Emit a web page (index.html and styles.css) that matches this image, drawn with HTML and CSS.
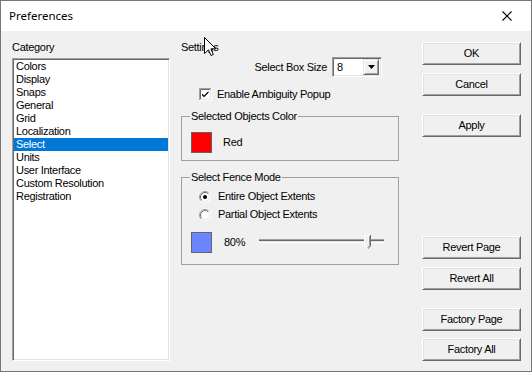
FILE: index.html
```html
<!DOCTYPE html>
<html>
<head>
<meta charset="utf-8">
<link rel="stylesheet" href="styles.css">
</head>
<body>
<div class="window">
  <div class="titlebar">
    <span class="title">Preferences</span>
    <svg class="close" width="10" height="10" viewBox="0 0 10 10"><path d="M0.5 0.5 L9.5 9.5 M9.5 0.5 L0.5 9.5" stroke="#000" stroke-width="1.1" fill="none"/></svg>
  </div>
  <div class="client">
    <div class="col-left">
      <div class="label">Category</div>
      <div class="listbox">
        <div class="item">Colors</div>
        <div class="item">Display</div>
        <div class="item">Snaps</div>
        <div class="item">General</div>
        <div class="item">Grid</div>
        <div class="item">Localization</div>
        <div class="item selected">Select</div>
        <div class="item">Units</div>
        <div class="item">User Interface</div>
        <div class="item">Custom Resolution</div>
        <div class="item">Registration</div>
      </div>
    </div>
    <div class="col-mid">
      <div class="label">Settings</div>
      <div class="size-row">
        <span>Select Box Size</span>
        <div class="combo">
          <span class="combo-text">8</span>
          <span class="combo-btn"><svg width="7" height="4" viewBox="0 0 7 4"><path d="M0 0 H7 L3.5 4 Z" fill="#000"/></svg></span>
        </div>
      </div>
      <div class="check-row">
        <svg class="check" width="13" height="13" viewBox="0 0 13 13">
          <rect x="0" y="0" width="13" height="13" fill="#fff"/>
          <path d="M0.5 12.5 V0.5 H12.5" stroke="#a0a0a0" fill="none"/>
          <path d="M1.5 11.5 V1.5 H11.5" stroke="#696969" fill="none"/>
          <path d="M0 12.5 H12.5 V0" stroke="#fff" fill="none"/>
          <path d="M1 11.5 H11.5 V1" stroke="#e3e3e3" fill="none"/>
          <path d="M3 5.5 L5 7.5 L9.5 3 V4.8 L5 9.3 L3 7.3 Z" fill="#000"/>
        </svg>
        <span>Enable Ambiguity Popup</span>
      </div>
      <fieldset class="group g1">
        <legend>Selected Objects Color</legend>
        <div class="swatch-row">
          <span class="swatch red"></span>
          <span>Red</span>
        </div>
      </fieldset>
      <fieldset class="group g2">
        <legend>Select Fence Mode</legend>
        <div class="radio-row first">
          <svg class="radio" width="12" height="12" viewBox="0 0 12 12">
            <circle cx="6" cy="6" r="5.5" fill="#fff"/>
            <path d="M2.11 9.89 A5.5 5.5 0 0 1 9.89 2.11" stroke="#a0a0a0" fill="none"/>
            <path d="M9.89 2.11 A5.5 5.5 0 0 1 2.11 9.89" stroke="#fff" fill="none"/>
            <path d="M2.82 9.18 A4.5 4.5 0 0 1 9.18 2.82" stroke="#696969" fill="none"/>
            <path d="M9.18 2.82 A4.5 4.5 0 0 1 2.82 9.18" stroke="#e3e3e3" fill="none"/>
            <circle cx="6" cy="6" r="2" fill="#000"/>
          </svg>
          <span>Entire Object Extents</span>
        </div>
        <div class="radio-row">
          <svg class="radio" width="12" height="12" viewBox="0 0 12 12">
            <circle cx="6" cy="6" r="5.5" fill="#fff"/>
            <path d="M2.11 9.89 A5.5 5.5 0 0 1 9.89 2.11" stroke="#a0a0a0" fill="none"/>
            <path d="M9.89 2.11 A5.5 5.5 0 0 1 2.11 9.89" stroke="#fff" fill="none"/>
            <path d="M2.82 9.18 A4.5 4.5 0 0 1 9.18 2.82" stroke="#696969" fill="none"/>
            <path d="M9.18 2.82 A4.5 4.5 0 0 1 2.82 9.18" stroke="#e3e3e3" fill="none"/>
          </svg>
          <span>Partial Object Extents</span>
        </div>
        <div class="swatch-row fence">
          <span class="swatch blue"></span>
          <span class="pct">80%</span>
          <svg class="slider" width="126" height="21" viewBox="0 0 126 21">
            <rect x="0" y="7" width="125" height="1" fill="#a0a0a0"/>
            <rect x="0" y="8" width="125" height="1" fill="#696969"/>
            <rect x="0" y="9" width="125" height="1" fill="#e3e3e3"/>
            <rect x="0" y="10" width="125" height="1" fill="#fff"/>
            <path d="M105 3 H112 V14 L108.5 17.5 L105 14 Z" fill="#f0f0f0"/>
            <path d="M105.5 14 V3.5 H111.5" stroke="#fff" fill="none"/>
            <path d="M111.5 3 V14 L108.5 17" stroke="#696969" fill="none"/>
            <path d="M110.5 4 V13.6 L108.5 15.6" stroke="#a0a0a0" fill="none"/>
            <path d="M105.5 14 L108.5 17" stroke="#fff" fill="none"/>
          </svg>
        </div>
      </fieldset>
    </div>
    <div class="col-right">
      <button class="btn">OK</button>
      <button class="btn gap8">Cancel</button>
      <button class="btn gap18">Apply</button>
      <button class="btn gap-big">Revert Page</button>
      <button class="btn gap8">Revert All</button>
      <button class="btn gap18">Factory Page</button>
      <button class="btn gap7">Factory All</button>
    </div>
  </div>
  <svg class="cursor" width="13" height="20" viewBox="0 0 13 20">
    <path d="M0.5 0.5 V16.5 L4.5 12.8 L7 18.5 L9.3 17.5 L6.9 11.8 H11.8 Z" fill="#fff" stroke="#000" stroke-width="1" stroke-linejoin="miter"/>
  </svg>
</div>
</body>
</html>
```

FILE: styles.css
```css
* { box-sizing: border-box; }

body {
  margin: 0;
  font-family: "Liberation Sans", Arial, sans-serif;
  font-size: 11px;
  letter-spacing: -0.3px;
  color: #000;
}

.window {
  position: relative;
  width: 532px;
  height: 372px;
  border: 1px solid #777;
  background: #f0f0f0;
  display: flex;
  flex-direction: column;
  overflow: hidden;
}

.titlebar {
  height: 30px;
  flex: none;
  background: #fff;
  display: flex;
  align-items: center;
  justify-content: space-between;
  padding-left: 8px;
  padding-right: 19px;
}

.title {
  font-family: "Noto Sans", "Open Sans", sans-serif;
  font-size: 11.5px;
  letter-spacing: 0;
  line-height: 16px;
}

.close { display: block; }

.client {
  flex: 1;
  display: flex;
  align-items: flex-start;
}

.label { line-height: 13px; }

.col-left {
  margin-left: 11px;
  width: 158px;
  padding-top: 10px;
}

.listbox {
  margin-top: 4px;
  height: 303px;
  background: #fff;
  border: 1px solid;
  border-color: #a0a0a0 #fff #fff #a0a0a0;
  box-shadow: inset 1px 1px #696969, inset -1px -1px #e3e3e3;
  padding: 1px;
}

.item {
  line-height: 13px;
  height: 13px;
  padding-left: 2px;
  white-space: nowrap;
}

.item.selected {
  background: #0078d7;
  color: #fff;
}

.col-mid {
  margin-left: 11px;
  width: 218px;
  padding-top: 10px;
}

.size-row {
  margin-top: 3px;
  height: 20px;
  display: flex;
  align-items: center;
  justify-content: flex-end;
  gap: 5px;
  padding-right: 17px;
}

.combo {
  width: 50px;
  height: 20px;
  background: #fff;
  border: 1px solid;
  border-color: #a0a0a0 #fff #fff #a0a0a0;
  box-shadow: inset 1px 1px #696969, inset -1px -1px #e3e3e3;
  display: flex;
  align-items: center;
  justify-content: space-between;
  padding: 2px;
}

.combo-text {
  padding-left: 2px;
  line-height: 13px;
}

.combo-btn {
  width: 16px;
  height: 16px;
  background: #f0f0f0;
  border: 1px solid;
  border-color: #e3e3e3 #696969 #696969 #e3e3e3;
  box-shadow: inset 1px 1px #fff, inset -1px -1px #a0a0a0;
  display: flex;
  align-items: center;
  justify-content: center;
}

.combo-btn svg { display: block; }

.check-row {
  margin-top: 11px;
  height: 13px;
  display: flex;
  align-items: center;
  gap: 5px;
  padding-left: 18px;
  line-height: 13px;
}

.check, .radio { display: block; flex: none; }

.group {
  margin: 0;
  padding: 0;
  border: 1px solid #a0a0a0;
  min-width: 0;
}

.group legend {
  margin-left: 8px;
  padding: 0 1px;
  line-height: 13px;
}

.g1 {
  margin-top: 9px;
  padding-bottom: 7px;
}

.g2 {
  margin-top: 10px;
  padding-bottom: 11px;
}

.swatch-row {
  display: flex;
  align-items: center;
  padding-left: 9px;
  gap: 11px;
  line-height: 13px;
}

.g1 .swatch-row { padding-top: 9px; }

.swatch {
  width: 21px;
  height: 21px;
  border: 1px solid #646464;
  flex: none;
}

.swatch.red { background: #ff0000; }
.swatch.blue { background: #6b84ff; }

.swatch-row.fence {
  margin-top: 11px;
  gap: 0;
}

.pct {
  margin-left: 12px;
  width: 35px;
}

.slider { display: block; }

.radio-row {
  display: flex;
  align-items: center;
  height: 13px;
  gap: 7px;
  padding-left: 17px;
  line-height: 13px;
  margin-top: 5px;
}

.radio-row.first { margin-top: 6px; }

.col-right {
  margin-left: 23px;
  width: 99px;
  padding-top: 11px;
  display: flex;
  flex-direction: column;
}

.btn {
  width: 99px;
  height: 23px;
  font-family: inherit;
  font-size: 11px;
  letter-spacing: -0.3px;
  color: #000;
  background: #f0f0f0;
  border: 1px solid;
  border-color: #fff #696969 #696969 #fff;
  box-shadow: inset 1px 1px #e3e3e3, inset -1px -1px #a0a0a0;
  padding: 0;
  margin: 0;
  line-height: 13px;
}

.gap7 { margin-top: 7px; }
.gap8 { margin-top: 8px; }
.gap18 { margin-top: 18px; }
.gap-big { margin-top: 99px; }

.cursor {
  position: absolute;
  left: 203px;
  top: 36px;
}
```
